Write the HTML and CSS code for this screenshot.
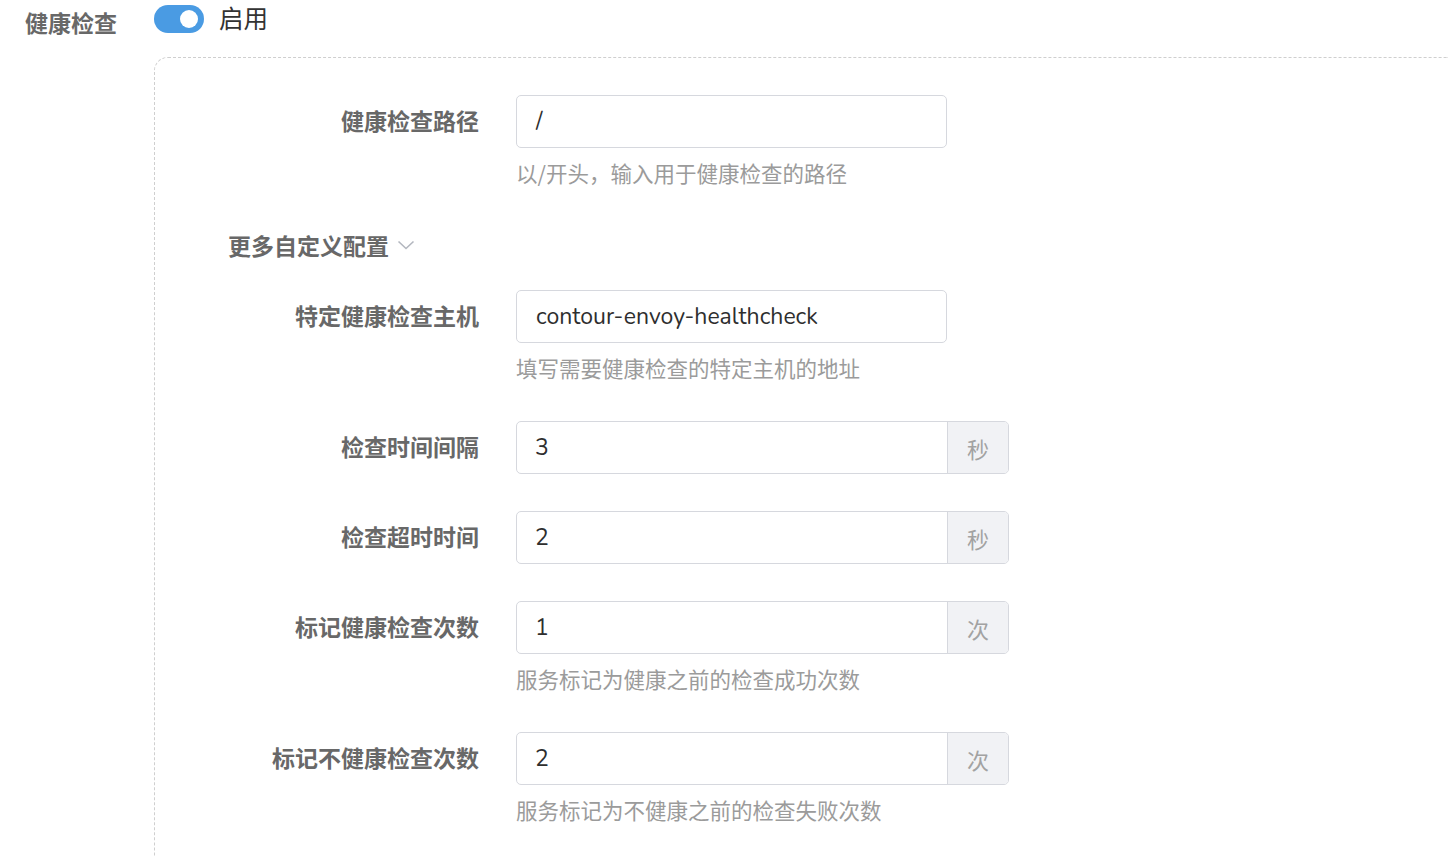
FILE: index.html
```html
<!DOCTYPE html>
<html lang="zh">
<head>
<meta charset="utf-8">
<link rel="stylesheet" href="styles.css">
</head>
<body>
<div class="top-row">
  <div class="top-label">健康检查</div>
  <div class="switch"><span class="knob"></span></div>
  <div class="switch-text">启用</div>
</div>
<div class="box">
  <div class="item">
    <div class="label">健康检查路径</div>
    <div class="field">
      <div class="input"><span class="value">/</span></div>
      <div class="hint">以/开头，输入用于健康检查的路径</div>
    </div>
  </div>
  <div class="more">更多自定义配置
    <svg class="chev" width="18" height="12" viewBox="0 0 18 12"><path d="M1.5 2.5 L9 9.5 L16.5 2.5" fill="none" stroke="#b3b7bf" stroke-width="1.6"/></svg>
  </div>
  <div class="item">
    <div class="label">特定健康检查主机</div>
    <div class="field">
      <div class="input"><span class="value">contour-envoy-healthcheck</span></div>
      <div class="hint">填写需要健康检查的特定主机的地址</div>
    </div>
  </div>
  <div class="item">
    <div class="label">检查时间间隔</div>
    <div class="field">
      <div class="group"><div class="input"><span class="value">3</span></div><div class="addon">秒</div></div>
    </div>
  </div>
  <div class="item">
    <div class="label">检查超时时间</div>
    <div class="field">
      <div class="group"><div class="input"><span class="value">2</span></div><div class="addon">秒</div></div>
    </div>
  </div>
  <div class="item">
    <div class="label">标记健康检查次数</div>
    <div class="field">
      <div class="group"><div class="input"><span class="value">1</span></div><div class="addon">次</div></div>
      <div class="hint">服务标记为健康之前的检查成功次数</div>
    </div>
  </div>
  <div class="item">
    <div class="label">标记不健康检查次数</div>
    <div class="field">
      <div class="group"><div class="input"><span class="value">2</span></div><div class="addon">次</div></div>
      <div class="hint">服务标记为不健康之前的检查失败次数</div>
    </div>
  </div>
</div>
</body>
</html>
```
FILE: styles.css
```css
html, body {
  margin: 0;
  padding: 0;
  background: #fff;
  overflow: hidden;
}
body {
  font-family: "Noto Sans", "Noto Sans CJK SC", sans-serif;
  width: 1448px;
  height: 856px;
}
.top-row {
  display: flex;
  align-items: center;
  height: 38px;
}
.top-label {
  width: 129px;
  padding-left: 25px;
  font-size: 23px;
  font-weight: 700;
  color: #686868;
  margin-top: 6px;
  font-family: "Noto Sans CJK SC", sans-serif;
}
.switch {
  width: 50px;
  height: 28px;
  border-radius: 14px;
  background: #4a9be3;
  position: relative;
  flex: none;
}
.knob {
  position: absolute;
  right: 6px;
  top: 5px;
  width: 18px;
  height: 18px;
  border-radius: 50%;
  background: #fff;
}
.switch-text {
  margin-left: 15px;
  font-size: 24.5px;
  color: #333;
  font-family: "Noto Sans CJK SC", sans-serif;
  margin-top: -4px;
}
.box {
  margin-left: 154px;
  margin-top: 19px;
  border-top: 1px dashed #cfcfcf;
  border-left: 1px dashed #cfcfcf;
  border-top-left-radius: 14px;
  padding-top: 37px;
  height: 780px;
}
.item {
  display: flex;
  margin-bottom: 37px;
}
.label {
  width: 324px;
  flex: none;
  text-align: right;
  height: 53px;
  line-height: 51px;
  font-size: 23px;
  font-weight: 700;
  color: #686868;
  font-family: "Noto Sans CJK SC", sans-serif;
  margin-right: 37px;
}
.field {
  display: flex;
  flex-direction: column;
}
.group {
  display: flex;
  border: 1px solid #d6d8de;
  border-radius: 5px;
  width: 491px;
  height: 51px;
  overflow: hidden;
}
.input {
  box-sizing: border-box;
  width: 431px;
  height: 53px;
  border: 1px solid #d6d8de;
  border-radius: 5px;
  padding-left: 19px;
  display: flex;
  align-items: center;
}
.group .input {
  border: none;
  border-radius: 0;
  width: 430px;
  height: 51px;
  padding-left: 18px;
}
.value {
  font-size: 23px;
  color: #2e2e2e;
  font-family: "Nunito", "Noto Sans", sans-serif;
}
.addon {
  flex: 1;
  background: #f1f2f5;
  border-left: 1px solid #d6d8de;
  color: #a2a2a2;
  font-size: 22px;
  font-family: "Noto Sans CJK SC", sans-serif;
  display: flex;
  align-items: center;
  justify-content: center;
}
.hint {
  margin-top: 10px;
  line-height: 30px;
  font-size: 21.5px;
  color: #9b9b9b;
  font-family: "Noto Sans CJK SC", sans-serif;
  margin-bottom: 1px;
}
.more {
  margin-left: 73px;
  height: 40px;
  line-height: 40px;
  font-size: 23px;
  font-weight: 700;
  color: #686868;
  font-family: "Noto Sans CJK SC", sans-serif;
  margin-top: -1px;
  margin-bottom: 25px;
  display: flex;
  align-items: center;
}
.chev {
  margin-left: 8px;
  margin-top: 0px;
}
```
